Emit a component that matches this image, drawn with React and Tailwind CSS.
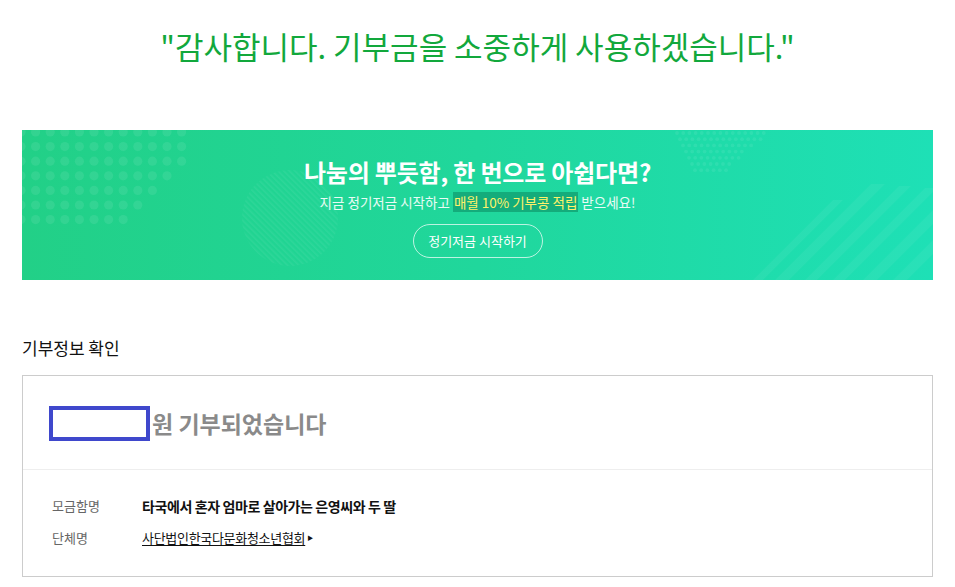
import React from 'react';

const FONT = { fontFamily: '"Noto Sans CJK KR", "Noto Sans", sans-serif' };

// left dot field in the banner
const BannerDots = () => {
  const dots = [];
  for (let j = 0; j < 7; j++) {
    const limit = 170 - Math.max(0, j - 2) * 14;
    for (let i = 0; i < 13; i++) {
      const x = -1 + i * 14.6;
      if (x > limit) continue;
      dots.push(<circle key={`${i}-${j}`} cx={x} cy={2 + j * 14.6} r="4.6" />);
    }
  }
  return (
    <svg className="absolute left-0 top-0" width="200" height="110" fill="#ffffff" fillOpacity="0.08">
      {dots}
    </svg>
  );
};

const SmallDots = () => {
  const dots = [];
  for (let j = 0; j < 7; j++) {
    const start = j * 3;
    const end = 92 - j * 7;
    for (let x = start; x <= end; x += 6.2) {
      dots.push(<circle key={`${x}-${j}`} cx={x + 2} cy={3 + j * 6.2} r="1.9" />);
    }
  }
  return (
    <svg className="absolute left-[653px] top-0" width="100" height="50" fill="#ffffff" fillOpacity="0.07">
      {dots}
    </svg>
  );
};

const StripedCircle = () => (
  <svg className="absolute left-[218px] top-[38px]" width="100" height="100">
    <defs>
      <pattern id="stripes" width="4" height="4" patternUnits="userSpaceOnUse" patternTransform="rotate(-45)">
        <rect width="1.5" height="4" fill="#ffffff" fillOpacity="0.06" />
      </pattern>
    </defs>
    <circle cx="50" cy="50" r="48" fill="url(#stripes)" />
  </svg>
);

const Stripes = () => (
  <svg className="absolute right-0 bottom-0" width="180" height="96" fill="#ffffff" fillOpacity="0.05">
    <polygon points="0,96 80,16 90,16 10,96" />
    <polygon points="22,96 118,0 132,0 36,96" />
    <polygon points="52,96 146,2 158,2 64,96" />
    <polygon points="80,96 172,4 180,4 180,8 92,96" />
    <polygon points="110,96 180,26 180,40 124,96" />
    <polygon points="140,96 180,56 180,70 154,96" />
  </svg>
);

const Banner = () => (
  <div
    className="relative h-[150px] overflow-hidden flex flex-col items-center pt-[28px] text-white"
    style={{ background: 'linear-gradient(90deg, #22d087 0%, #20d79c 50%, #1ee0b6 100%)' }}
  >
    <BannerDots />
    <SmallDots />
    <StripedCircle />
    <Stripes />
    <div className="relative text-[24px] leading-[28px] font-bold tracking-[-0.2px]">
      나눔의 뿌듯함, 한 번으로 아쉽다면?
    </div>
    <div className="relative mt-[6px] text-[13.5px] leading-[20px] text-white/90">
      지금 정기저금 시작하고{' '}
      <span className="bg-[#14ac7b] text-[#fff26a] px-[1px]">매월 10% 기부콩 적립</span>{' '}
      받으세요!
    </div>
    <button className="relative mt-[12px] h-[34px] w-[130px] rounded-full border border-white/70 text-[13px] text-white">
      정기저금 시작하기
    </button>
  </div>
);

const InfoRow = ({ label, children }) => (
  <div className="flex items-center leading-[20px]">
    <div className="w-[90px] text-[13px] text-[#666]">{label}</div>
    {children}
  </div>
);

export default function App() {
  return (
    <div className="bg-white min-h-[587px] px-[22px]" style={FONT}>
      <h1 className="pt-[31px] text-center text-[31px] leading-[30px] text-[#12a83c]">
        "감사합니다. 기부금을 소중하게 사용하겠습니다."
      </h1>

      <div className="mt-[69px]">
        <Banner />
      </div>

      <h2 className="mt-[58px] text-[17px] leading-[20px] text-[#111]">기부정보 확인</h2>

      <div className="mt-[17px] border border-[#ccc]">
        <div className="flex items-center pl-[26px] pt-[30px] pb-[28px]">
          <div className="w-[101px] h-[35px] border-4 border-[#3f48cc]" />
          <span className="ml-[2px] text-[23px] leading-[35px] font-bold text-[#8a8a8a]">
            원 기부되었습니다
          </span>
        </div>
        <div className="border-t border-[#eee] pl-[29px] pt-[26px] pb-[28px] flex flex-col gap-[12px]">
          <InfoRow label="모금함명">
            <span className="text-[14px] font-bold text-[#111] tracking-[-0.4px]">
              타국에서 혼자 엄마로 살아가는 은영씨와 두 딸
            </span>
          </InfoRow>
          <InfoRow label="단체명">
            <a className="text-[13px] text-[#111] underline underline-offset-2 tracking-[-0.3px]">
              사단법인한국다문화청소년협회
            </a>
            <span className="ml-[2px] text-[6px] text-[#111]">▶</span>
          </InfoRow>
        </div>
      </div>
    </div>
  );
}
